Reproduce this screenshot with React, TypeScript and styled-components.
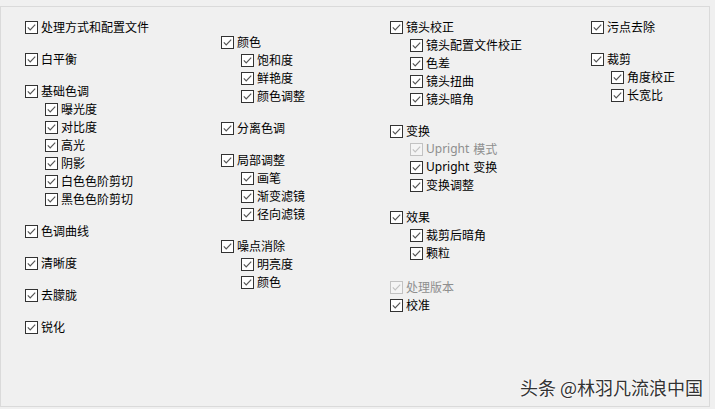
import styled, {createGlobalStyle} from "styled-components";

const GlobalStyle = createGlobalStyle`
  html, body {
    margin: 0;
    padding: 0;
    background: #f0f0f0;
  }
  body {
    font-family: "Noto Sans CJK SC", "Microsoft YaHei", sans-serif;
  }
`;

const Page = styled.div`
  width: 715px;
  height: 409px;
  padding-top: 6px;
  box-sizing: border-box;
  background: #f0f0f0;
  position: relative;
  overflow: hidden;
`;

const Panel = styled.div`
  width: 710px;
  height: 401px;
  box-sizing: border-box;
  border: 1px solid #dadada;
  padding: 11px 0 0 24px;
  display: grid;
  grid-template-columns: 196px 169px 201px 1fr;
  align-items: start;
`;

const Column = styled.div<{$offset?: number}>`
  display: flex;
  flex-direction: column;
  gap: 14px;
  padding-top: ${props => props.$offset ?? 0}px;
`;

const Group = styled.div<{$extra?: number}>`
  display: flex;
  flex-direction: column;
  margin-top: ${props => props.$extra ?? 0}px;
`;

const Row = styled.label<{$level: number; $disabled?: boolean}>`
  display: flex;
  align-items: center;
  height: 18px;
  padding-left: ${props => props.$level * 20}px;
  font-size: 12px;
  line-height: 18px;
  color: ${props => (props.$disabled ? "#8e8e8e" : "#000")};
  white-space: nowrap;
`;

const Box = styled.svg`
  width: 13px;
  height: 13px;
  flex: none;
  margin-right: 3px;
`;

const Latin = styled.span`
  font-family: "Segoe UI", "Noto Sans", sans-serif;
  margin-right: 4px;
`;

const Watermark = styled.div`
  position: absolute;
  right: 12px;
  bottom: 9px;
  font-size: 18px;
  color: #333;
  letter-spacing: 0;
  text-shadow: 0 0 2px #fff, 0 0 2px #fff;
`;

interface Item {
  label: string;
  level?: number;
  disabled?: boolean;
  latin?: string;
}

interface GroupData {
  items: Item[];
  extra?: number;
}

function CheckBox({disabled}: {disabled?: boolean}) {
  const c = disabled ? "#c2c2c2" : "#333";
  return (
    <Box viewBox="0 0 13 13">
      <rect x="0.5" y="0.5" width="12" height="12" fill={disabled ? "#f4f4f4" : "#fff"} stroke={c} />
      <polyline points="2.8,6.4 5.2,8.8 10.2,3.6" fill="none" stroke={disabled ? "#c2c2c2" : "#555"} strokeWidth="1.2" />
    </Box>
  );
}

const columns: {offset?: number; groups: GroupData[]}[] = [
  {
    groups: [
      {items: [{label: "处理方式和配置文件"}]},
      {items: [{label: "白平衡"}]},
      {
        items: [
          {label: "基础色调"},
          {label: "曝光度", level: 1},
          {label: "对比度", level: 1},
          {label: "高光", level: 1},
          {label: "阴影", level: 1},
          {label: "白色色阶剪切", level: 1},
          {label: "黑色色阶剪切", level: 1},
        ],
      },
      {items: [{label: "色调曲线"}]},
      {items: [{label: "清晰度"}]},
      {items: [{label: "去朦胧"}]},
      {items: [{label: "锐化"}]},
    ],
  },
  {
    offset: 15,
    groups: [
      {
        items: [
          {label: "颜色"},
          {label: "饱和度", level: 1},
          {label: "鲜艳度", level: 1},
          {label: "颜色调整", level: 1},
        ],
      },
      {items: [{label: "分离色调"}]},
      {
        items: [
          {label: "局部调整"},
          {label: "画笔", level: 1},
          {label: "渐变滤镜", level: 1},
          {label: "径向滤镜", level: 1},
        ],
      },
      {
        items: [
          {label: "噪点消除"},
          {label: "明亮度", level: 1},
          {label: "颜色", level: 1},
        ],
      },
    ],
  },
  {
    groups: [
      {
        items: [
          {label: "镜头校正"},
          {label: "镜头配置文件校正", level: 1},
          {label: "色差", level: 1},
          {label: "镜头扭曲", level: 1},
          {label: "镜头暗角", level: 1},
        ],
      },
      {
        items: [
          {label: "变换"},
          {label: "模式", latin: "Upright", level: 1, disabled: true},
          {label: "变换", latin: "Upright", level: 1},
          {label: "变换调整", level: 1},
        ],
      },
      {
        items: [
          {label: "效果"},
          {label: "裁剪后暗角", level: 1},
          {label: "颗粒", level: 1},
        ],
      },
      {
        extra: 2,
        items: [
          {label: "处理版本", disabled: true},
          {label: "校准"},
        ],
      },
    ],
  },
  {
    groups: [
      {items: [{label: "污点去除"}]},
      {
        items: [
          {label: "裁剪"},
          {label: "角度校正", level: 1},
          {label: "长宽比", level: 1},
        ],
      },
    ],
  },
];

function App() {
  return (
    <Page>
      <GlobalStyle />
      <Panel>
        {columns.map((col, ci) => (
          <Column key={ci} $offset={col.offset}>
            {col.groups.map((g, gi) => (
              <Group key={gi} $extra={g.extra}>
                {g.items.map((it, ii) => (
                  <Row key={ii} $level={it.level ?? 0} $disabled={it.disabled}>
                    <CheckBox disabled={it.disabled} />
                    {it.latin && <Latin>{it.latin}</Latin>}
                    {it.label}
                  </Row>
                ))}
              </Group>
            ))}
          </Column>
        ))}
      </Panel>
      <Watermark>头条 @林羽凡流浪中国</Watermark>
    </Page>
  );
}

export default App;
